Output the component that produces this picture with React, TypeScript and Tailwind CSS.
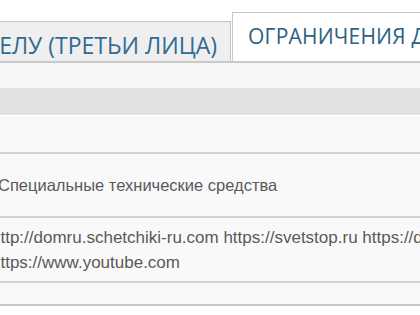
import React from "react";

const tabFont = { fontFamily: '"Open Sans", "Noto Sans", sans-serif' };

export default function App() {
  return (
    <div className="relative h-[315px] w-[420px] overflow-hidden bg-white font-['Liberation_Sans',Arial,sans-serif]">
      {/* tabs */}
      <div className="flex h-[63px] items-end border-b-2 border-[#c9c9c9] pt-[13px]">
        <div
          className="-ml-[60px] flex h-[40px] w-[291px] shrink-0 items-center justify-end whitespace-nowrap border border-b-0 border-[#c4c4c4] bg-[#efefef] pr-[13px] pt-[7px] text-[23px] leading-none text-[#2f6b93]"
          style={tabFont}
        >
          ТЕЛУ (ТРЕТЬИ ЛИЦА)
        </div>
        <div
          className="ml-[1px] flex h-[49px] shrink-0 items-center whitespace-nowrap border border-b-0 border-[#c8c8c8] bg-white pb-[2px] pl-[15px] text-[21px] leading-none tracking-[0.2px] text-[#2d6182]"
          style={tabFont}
        >
          ОГРАНИЧЕНИЯ ДОСТУПА
        </div>
      </div>

      {/* table */}
      <div className="h-[25px] bg-[#f8f8f8]" />
      <div className="h-[28px] border-b border-white bg-[#e2e2e2]" />
      <div className="h-[38px] border-b-2 border-[#d2d2d2] bg-[#f9f9f9]" />
      <div className="flex h-[64px] items-center border-b-2 border-[#d2d2d2] bg-[#f9f9f9]">
        <span className="-ml-[2px] whitespace-nowrap text-[16.5px] text-[#5a5a5a]">
          Специальные технические средства
        </span>
      </div>
      <div className="flex h-[65px] flex-col justify-center border-b-2 border-[#d2d2d2] bg-[#f9f9f9] text-[17px] leading-[25px] text-[#5a5a5a]">
        <span className="-ml-[9px] whitespace-nowrap">
          http://domru.schetchiki-ru.com https://svetstop.ru https://domofon.ru
        </span>
        <span className="-ml-[9px] whitespace-nowrap">https://www.youtube.com</span>
      </div>
      <div className="h-[23px] border-b-2 border-[#c6c6c6] bg-[#f9f9f9]" />
    </div>
  );
}
